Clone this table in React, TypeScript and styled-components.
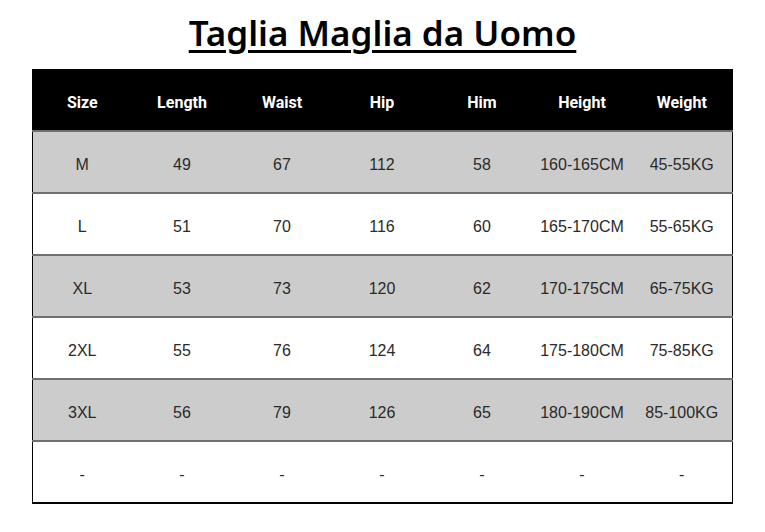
import React from 'react';
import styled, {createGlobalStyle} from 'styled-components';

const GlobalStyle = createGlobalStyle`
  html, body {
    margin: 0;
    padding: 0;
    background: #ffffff;
  }
`;

const headers = ['Size', 'Length', 'Waist', 'Hip', 'Him', 'Height', 'Weight'];

const rows: string[][] = [
  ['M', '49', '67', '112', '58', '160-165CM', '45-55KG'],
  ['L', '51', '70', '116', '60', '165-170CM', '55-65KG'],
  ['XL', '53', '73', '120', '62', '170-175CM', '65-75KG'],
  ['2XL', '55', '76', '124', '64', '175-180CM', '75-85KG'],
  ['3XL', '56', '79', '126', '65', '180-190CM', '85-100KG'],
  ['-', '-', '-', '-', '-', '-', '-'],
];

const Page = styled.div`
  width: 765px;
  height: 532px;
  display: flex;
  flex-direction: column;
  align-items: center;
`;

const Title = styled.h1`
  margin: 0;
  height: 69px;
  box-sizing: border-box;
  padding-top: 11px;
  font-family: 'Noto Sans', 'Open Sans', sans-serif;
  font-size: 35px;
  font-weight: 600;
  line-height: 44px;
  color: #000;
  text-decoration: underline;
  text-decoration-thickness: 3px;
  text-underline-offset: 4px;
`;

const Table = styled.table`
  width: 701px;
  margin-right: 1px;
  border-collapse: collapse;
  table-layout: fixed;
  border-left: 1px solid #000;
  border-right: 1px solid #000;
  border-bottom: 2px solid #000;
`;

const Row = styled.tr<{$shade: boolean}>`
  height: 62px;
  background: ${p => (p.$shade ? '#cccccc' : '#ffffff')};
  border-bottom: 2px solid #6f6f6f;

  &:last-child {
    border-bottom: none;
  }
`;

const HeadRow = styled.tr`
  height: 62px;
  background: #000;
  border-bottom: 2px solid #6f6f6f;
`;

const HeadCell = styled.th`
  padding: 5px 0 0;
  text-align: center;
  font-family: Roboto, 'Liberation Sans', sans-serif;
  font-size: 16px;
  font-weight: 700;
  color: #ffffff;
`;

const Cell = styled.td`
  padding: 5px 0 0;
  text-align: center;
  font-family: 'Liberation Sans', Arial, sans-serif;
  font-size: 16px;
  color: #2a2a2a;
  white-space: nowrap;
`;

export default function App() {
  return (
    <>
      <GlobalStyle />
      <Page>
        <Title>Taglia Maglia da Uomo</Title>
        <Table>
          <thead>
            <HeadRow>
              {headers.map(h => (
                <HeadCell key={h}>{h}</HeadCell>
              ))}
            </HeadRow>
          </thead>
          <tbody>
            {rows.map((r, i) => (
              <Row key={i} $shade={i % 2 === 0}>
                {r.map((c, j) => (
                  <Cell key={j}>{c}</Cell>
                ))}
              </Row>
            ))}
          </tbody>
        </Table>
      </Page>
    </>
  );
}
